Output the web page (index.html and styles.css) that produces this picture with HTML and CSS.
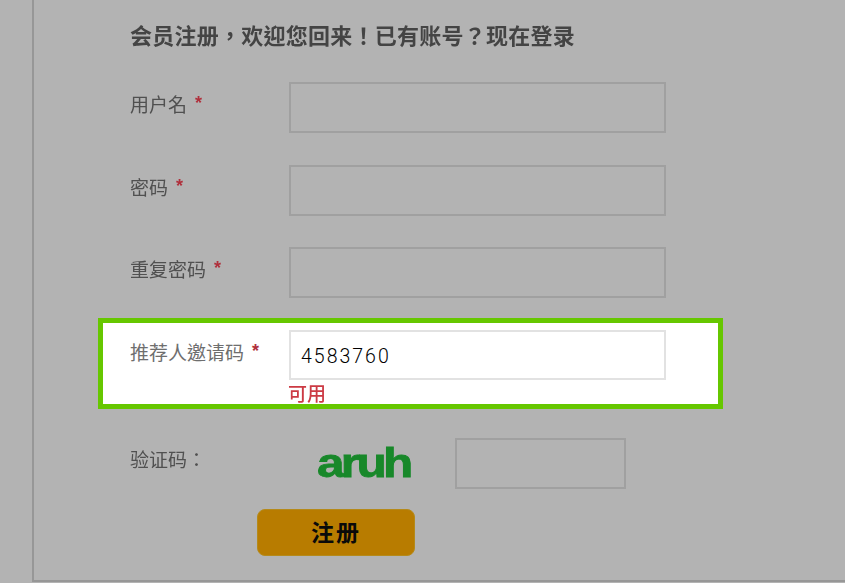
FILE: index.html
```html
<!DOCTYPE html>
<html lang="zh-TW">
<head>
<meta charset="utf-8">
<title>会员注册</title>
<link rel="stylesheet" href="styles.css">
</head>
<body>
<main class="panel">
  <h1 class="title">会员注册，欢迎您回来！已有账号？现在登录</h1>
  <form class="form">
    <div class="row">
      <label class="label">用户名<span class="req">*</span></label>
      <input class="field" type="text">
    </div>
    <div class="row">
      <label class="label">密码<span class="req">*</span></label>
      <input class="field" type="text">
    </div>
    <div class="row">
      <label class="label">重复密码<span class="req">*</span></label>
      <input class="field" type="text">
    </div>
    <div class="row row-focus">
      <label class="label">推荐人邀请码<span class="req">*</span></label>
      <div class="stack">
        <input class="field field-focus" type="text" value="4583760">
        <span class="ok">可用</span>
      </div>
    </div>
    <div class="row row-captcha">
      <label class="label">验证码：</label>
      <span class="captcha"><span class="captcha-text">aruh</span></span>
      <input class="field field-short" type="text">
    </div>
    <button class="submit" type="button">注册</button>
  </form>
</main>
</body>
</html>
```

FILE: styles.css
```css
* { box-sizing: border-box; }
html, body { margin: 0; height: 583px; overflow: hidden; }
body {
  background: #b3b3b3;
  font-family: "Noto Sans CJK TC", "Liberation Sans", sans-serif;
}
.panel {
  margin-left: 32px;
  height: 582px;
  border-left: 2px solid #979797;
  border-bottom: 2px solid #979797;
  padding-top: 21px;
  filter: blur(0.45px);
}
.title {
  margin: 0 0 0 96px;
  font-size: 22px;
  line-height: 27px;
  font-weight: 700;
  letter-spacing: 0.25px;
  color: #444;
  white-space: nowrap;
}
.form { display: flex; flex-direction: column; margin-top: 34px; }
.row {
  display: flex;
  align-items: flex-start;
  padding-left: 96px;
  margin-bottom: 31.5px;
}
.label {
  flex: none;
  width: 159px;
  padding-top: 8px;
  font-size: 19px;
  line-height: 26px;
  color: #505050;
  white-space: nowrap;
}
.req {
  margin-left: 8px;
  color: #b0303c;
  font-family: "Liberation Sans", sans-serif;
  font-size: 18px;
  font-weight: 700;
  vertical-align: 3px;
}
.field {
  display: block;
  width: 377px;
  height: 51px;
  margin: 0;
  padding: 0 10px;
  border: 2px solid #a0a0a0;
  background: transparent;
  border-radius: 0;
  outline: none;
}
.row-focus {
  width: 625px;
  height: 91px;
  margin: -12px 0 29.5px 64px;
  padding: 7px 0 0 27px;
  border: 5px solid #66c700;
  background: #fff;
}
.row-focus .label { color: #6e6e6e; }
.stack { display: flex; flex-direction: column; }
.field-focus {
  height: 50px;
  padding-top: 3px;
  border-color: #e2e2e2;
  background: #fff;
  font-family: Roboto, sans-serif;
  font-size: 19.5px;
  font-weight: 300;
  letter-spacing: 2px;
  color: #000;
}
.ok {
  margin-left: -1px;
  font-size: 19px;
  line-height: 26px;
  font-weight: 500;
  color: #cc3a44;
}
.row-captcha { margin-bottom: 20px; }
.captcha {
  flex: none;
  width: 166px;
  height: 50px;
  display: flex;
  align-items: center;
  padding-left: 28px;
}
.captcha-text {
  display: inline-block;
  font-family: "Liberation Sans", sans-serif;
  font-weight: 700;
  font-size: 40px;
  line-height: 50px;
  letter-spacing: -3px;
  color: #18882a;
  -webkit-text-stroke: 0.8px #18882a;
  transform: scaleX(1.24);
  transform-origin: left center;
}
.field-short { width: 171px; }
.submit {
  width: 158px;
  height: 47px;
  margin-left: 223px;
  padding: 0 0 3px;
  border: 1px solid #b58a1a;
  border-radius: 8px;
  background: #b87c00;
  color: #0a0a0a;
  font-family: "Noto Sans CJK TC", "Liberation Sans", sans-serif;
  font-size: 23px;
  font-weight: 700;
  letter-spacing: 2px;
}
```
